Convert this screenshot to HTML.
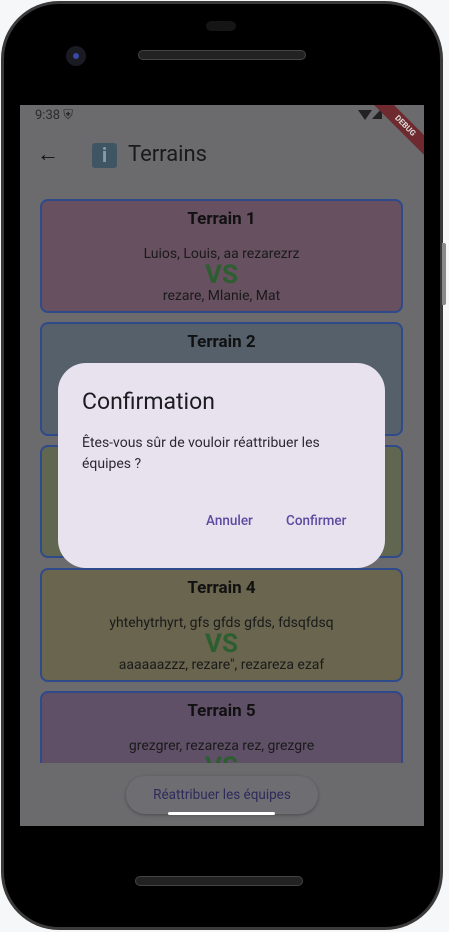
<!DOCTYPE html>
<html><head><style>
*{margin:0;padding:0;box-sizing:border-box}
body{width:449px;height:932px;background:#f6f7f9;position:relative;overflow:hidden;font-family:"Roboto","Liberation Sans",sans-serif}
.phone{position:absolute;left:1px;top:1px;width:442px;height:929px;border-radius:58px;background:#3a3a3a;}
.phone2{position:absolute;left:4px;top:4px;width:436px;height:923px;border-radius:55px;background:#000;}
.btn{position:absolute;left:442px;top:243px;width:4px;height:62px;background:#8a8a8a;border-radius:0 2px 2px 0}
.screen{position:absolute;left:20px;top:105px;width:404px;height:721px;background:#6b6a6d;overflow:hidden}
.card{position:absolute;left:20px;width:363px;border:2px solid #2f4a8a;border-radius:8px;text-align:center;color:#111}
.card h3{font-size:17px;font-weight:bold;margin-top:8px}
.card .t{font-size:14px;color:#1a1a1a;line-height:18px}
.vs{font-size:26px;font-weight:bold;color:#2d5e30;line-height:24px}
.dialog{position:absolute;left:58px;top:363px;width:327px;height:205px;background:#e8e2ef;border-radius:28px}
</style></head><body>
<div class="phone"></div><div class="phone2"></div><div class="btn"></div>
<div style="position:absolute;left:66px;top:46px;width:20px;height:20px;border-radius:50%;background:#1a1a22"></div>
<div style="position:absolute;left:73px;top:53px;width:6px;height:6px;border-radius:50%;background:#3a4aa0"></div>
<div style="position:absolute;left:138px;top:50px;width:168px;height:10px;border-radius:5px;background:#222;border:1px solid #444"></div>
<div style="position:absolute;left:206px;top:21px;width:30px;height:10px;border-radius:5px;background:#151515"></div>
<div style="position:absolute;left:135px;top:876px;width:168px;height:10px;border-radius:5px;background:#222;border:1px solid #444"></div>
<div class="screen">
 <div style="position:absolute;left:15px;top:3px;font-size:13px;color:#2a2a2a">9:38 &#x26E8;</div>
 <div style="position:absolute;left:338px;top:5px;width:0;height:0;border-left:7px solid transparent;border-right:7px solid transparent;border-top:10px solid #222"></div>
 <div style="position:absolute;left:352px;top:3px;width:0;height:0;border-left:10px solid transparent;border-bottom:11px solid #222"></div>
 <div style="position:absolute;left:345px;top:14px;width:80px;height:14px;background:#6e2a2e;transform:rotate(45deg);color:#ddd;font-size:8px;font-weight:bold;text-align:center;line-height:14px">DEBUG</div>
 <div style="position:absolute;left:17px;top:36px;font-size:22px;color:#111">&#8592;</div>
 <div style="position:absolute;left:72px;top:38px;width:25px;height:25px;background:#3f5563;border-radius:3px;color:#8a9aa4;font-weight:bold;font-size:20px;text-align:center;line-height:25px">i</div>
 <div style="position:absolute;left:108px;top:37px;font-size:22px;color:#1a1a1a">Terrains</div>
 <div class="card" style="top:94px;height:114px;background:#675060"><h3>Terrain 1</h3><div class="t" style="margin-top:16px">Luios, Louis, aa rezarezrz</div><div class="vs">VS</div><div class="t">rezare, Mlanie, Mat</div></div>
 <div class="card" style="top:217px;height:114px;background:#55606b"><h3>Terrain 2</h3></div>
 <div class="card" style="top:340px;height:113px;background:#616650"></div>
 <div class="card" style="top:463px;height:114px;background:#69654f"><h3>Terrain 4</h3><div class="t" style="margin-top:16px">yhtehytrhyrt, gfs gfds gfds, fdsqfdsq</div><div class="vs">VS</div><div class="t">aaaaaazzz, rezare", rezareza ezaf</div></div>
 <div class="card" style="top:586px;height:100px;background:#5f5068;border-bottom:none"><h3>Terrain 5</h3><div class="t" style="margin-top:16px">grezgrer, rezareza rez, grezgre</div><div class="vs">VS</div></div>
 <div style="position:absolute;left:0;top:658px;width:404px;height:63px;background:#6b6a6d"></div>
 <div style="position:absolute;left:106px;top:671px;width:192px;height:38px;border-radius:19px;background:#6e6d72;box-shadow:0 1px 3px rgba(0,0,0,.3);color:#2e2a5a;font-size:13.5px;text-align:center;line-height:38px">Réattribuer les équipes</div>
 <div style="position:absolute;left:148px;top:707px;width:107px;height:3px;border-radius:2px;background:#fff"></div>
</div>
<div class="dialog">
 <div style="position:absolute;left:24px;top:25px;font-size:23px;color:#1c1b1f">Confirmation</div>
 <div style="position:absolute;left:24px;top:70px;width:262px;font-size:14px;line-height:21px;color:#2a2830">Êtes-vous sûr de vouloir réattribuer les équipes ?</div>
 <div style="position:absolute;left:148px;top:150px;font-size:13.5px;color:#5b4ba0;font-weight:500">Annuler</div>
 <div style="position:absolute;left:228px;top:150px;font-size:13.5px;color:#5b4ba0;font-weight:500">Confirmer</div>
</div>
</body></html>
